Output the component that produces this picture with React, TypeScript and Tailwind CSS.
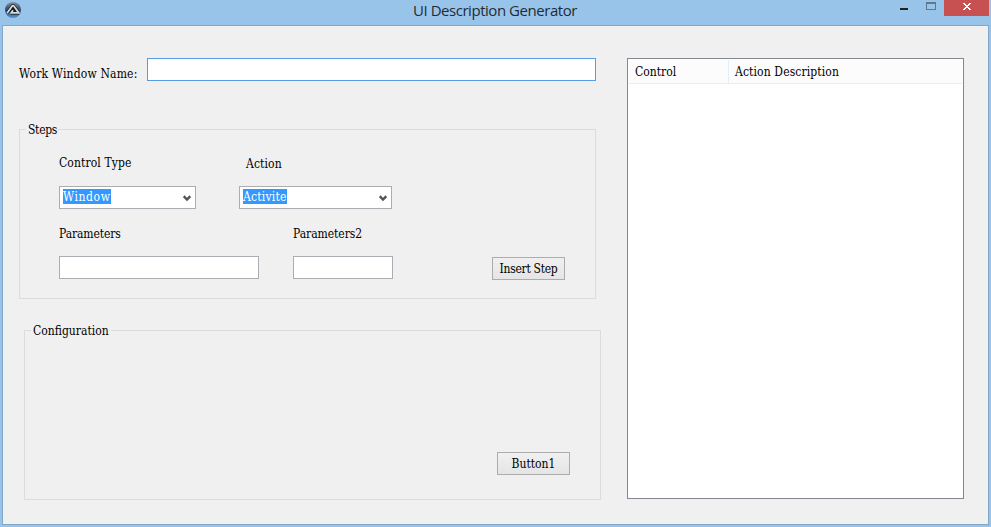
import type { ReactNode } from "react";

function ComboBox({ children, className }: { children: ReactNode; className: string }) {
  return (
    <div className={`flex h-[23px] items-start justify-between border border-[#abadb3] bg-white pl-[3px] pr-[4px] pt-[2px] ${className}`}>
      <span className="h-[15px] bg-[#3399ff] leading-[16px] text-white">{children}</span>
      <svg className="mt-[6px]" width="8" height="7" viewBox="0 0 8 7">
        <path d="M.7 1.2 4 4.6 7.3 1.2" fill="none" stroke="#555" strokeWidth="2.4" />
      </svg>
    </div>
  );
}

function Group({ title, className, children }: { title: ReactNode; className: string; children: ReactNode }) {
  return (
    <section className={`flex h-[170px] w-[577px] flex-col items-start border border-[#dcdcdc] ${className}`}>
      <h2 className="-mt-[9px] ml-[6px] h-[18px] bg-[#f0f0f0] px-[2px] leading-[18px]">{title}</h2>
      {children}
    </section>
  );
}

function Button({ children }: { children: ReactNode }) {
  return (
    <button className="flex h-[23px] w-[73px] shrink-0 items-center justify-center whitespace-nowrap border border-[#acacac] bg-linear-to-b from-[#f0f0f0] to-[#e5e5e5] pt-[2px] leading-[21px]">
      {children}
    </button>
  );
}

export default function App() {
  return (
    <div className="flex h-[527px] w-[991px] flex-col overflow-hidden bg-[#99c4ea] pb-[2px] pl-[2px] pr-[2px] font-['DejaVu_Serif_Condensed','DejaVu_Serif',serif] text-[12px] text-black">
      <header className="flex h-[25px] shrink-0 items-start">
        <svg className="ml-[3px] mt-[2px]" width="16" height="16" viewBox="0 0 16 16">
          <defs>
            <linearGradient id="orb" x1="0" y1="0" x2="0" y2="1">
              <stop offset="0" stopColor="#8092a5" />
              <stop offset=".5" stopColor="#29486c" />
              <stop offset="1" stopColor="#5a93cf" />
            </linearGradient>
          </defs>
          <circle cx="8" cy="8" r="8" fill="url(#orb)" />
          <path d="M2.4 10.9 7.1 4.2q.9-1.2 1.8 0l4.7 6.7H6.4L8 8.4" fill="#151b22" stroke="#111820" strokeWidth="3.2" strokeLinejoin="round" />
          <path d="M2.2 10.9 7 4.2q1-1.2 2 0l4.8 6.7H6.2L8 8.2" fill="none" stroke="#d9dcdd" strokeWidth="1.8" />
        </svg>
        <h1 className="ml-[392px] w-[164px] whitespace-nowrap font-['Open_Sans','Noto_Sans',sans-serif] text-[15px] leading-[21px] tracking-[-0.46px] text-[#222b35]">UI Description Generator</h1>
        <div className="ml-auto flex items-start">
          <svg width="44" height="16" viewBox="0 0 44 16" shapeRendering="crispEdges">
            <path d="M0 8h8v2H0z" fill="#222" />
            <path d="M26 2h10v8H26z M27 4h8v5h-8z" fill="#5d7890" fillRule="evenodd" />
          </svg>
          <div className="flex h-[16px] w-[45px] justify-center bg-[#c75050] pt-[3px]">
            <svg width="8" height="7" viewBox="0 0 8 7" shapeRendering="crispEdges" fill="#fff">
              <path d="M0 0h2v1h1v1h2V1h1V0h2v1H7v1H6v1H5v1h1v1h1v1h1v1H6V6H5V5H3v1H2v1H0V6h1V5h1V4h1V3H2V2H1V1H0z" />
            </svg>
          </div>
        </div>
      </header>
      <main className="flex h-[500px] w-[987px] shrink-0 items-start border border-[#82a7c7] bg-[#f0f0f0]">
        <div className="flex w-[624px] shrink-0 flex-col pl-[16px] pt-[32px]">
          <div className="flex h-[23px]">
            <label className="w-[128px] whitespace-nowrap pt-[6px] leading-[20px] tracking-[0.18px]">Work Window Name:</label>
            <input className="h-[23px] w-[449px] border border-[#569de5] bg-white outline-none" />
          </div>
          <Group title={<span className="-mr-[1px] tracking-[-0.3px]">Steps</span>} className="mt-[48px]">
            <div className="flex h-[34px] pl-[39px] pt-[15px] leading-[18px]">
              <div className="w-[187px] tracking-[0.1px]">Control Type</div>
              <div className="pt-px tracking-[0.1px]">Action</div>
            </div>
            <div className="mt-[13px] flex pl-[39px]">
              <ComboBox className="w-[137px] tracking-[0.6px]">Window</ComboBox>
              <ComboBox className="ml-[43px] w-[153px] tracking-[0.22px]">Activite</ComboBox>
            </div>
            <div className="mt-[16px] flex pl-[39px] leading-[18px]">
              <div className="w-[234px] tracking-[-0.1px]">Parameters</div>
              <div className="tracking-[-0.05px]">Parameters2</div>
            </div>
            <div className="mt-[13px] flex items-start pl-[39px]">
              <input className="h-[23px] w-[200px] border border-[#abadb3] bg-white" />
              <input className="ml-[34px] h-[23px] w-[100px] border border-[#abadb3] bg-white" />
              <div className="ml-[99px] mt-px tracking-[-0.28px]"><Button>Insert Step</Button></div>
            </div>
          </Group>
          <Group title={<span>Configuration</span>} className="ml-[5px] mt-[31px]">
            <div className="ml-[472px] mt-[112px]"><Button>Button1</Button></div>
          </Group>
        </div>
        <div className="mt-[32px] h-[441px] w-[337px] border border-[#828790] bg-white px-px pt-px">
          <div className="flex h-[24px] border-b border-[#e8eef7] bg-[#fcfcfc] leading-[25px]">
            <div className="w-[100px] border-r border-[#e5edf8] pl-[6px]">Control</div>
            <div className="pl-[6px] tracking-[0.12px]">Action Description</div>
          </div>
        </div>
      </main>
    </div>
  );
}
